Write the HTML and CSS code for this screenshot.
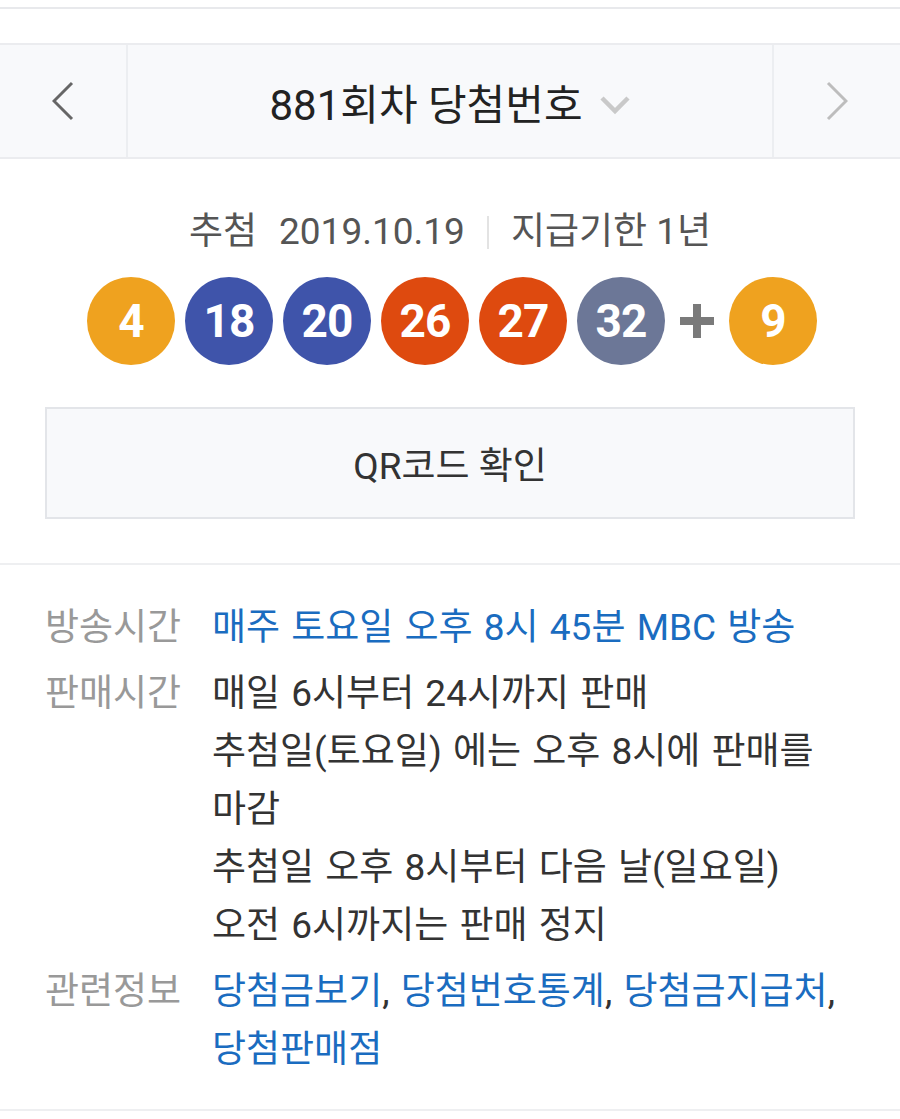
FILE: index.html
```html
<!DOCTYPE html>
<html lang="ko">
<head>
<meta charset="utf-8">
<title>881회차 당첨번호</title>
<link rel="stylesheet" href="styles.css">
</head>
<body>
<div class="topbar"></div>
<div class="spacer"></div>
<header class="round-nav">
  <div class="nav-cell">
    <svg class="arrow" width="22" height="40" viewBox="0 0 22 40"><polyline points="20,2 2,20 20,38" fill="none" stroke="#666" stroke-width="3"/></svg>
  </div>
  <div class="nav-title">
    <span class="title-text">881회차 당첨번호</span>
    <svg class="chev" width="32" height="20" viewBox="0 0 32 20"><polyline points="3,3 16,16 29,3" fill="none" stroke="#c9c9c9" stroke-width="4.5"/></svg>
  </div>
  <div class="nav-cell">
    <svg class="arrow" width="22" height="40" viewBox="0 0 22 40"><polyline points="2,2 20,20 2,38" fill="none" stroke="#bdbdbd" stroke-width="3"/></svg>
  </div>
</header>

<section class="result">
  <p class="draw-info"><span>추첨</span><span class="date">2019.10.19</span><span class="sep"></span><span>지급기한 1년</span></p>
  <div class="balls">
    <span class="ball yellow">4</span>
    <span class="ball blue">18</span>
    <span class="ball blue">20</span>
    <span class="ball red">26</span>
    <span class="ball red">27</span>
    <span class="ball gray">32</span>
    <svg class="plus" width="34" height="34" viewBox="0 0 34 34"><rect x="0" y="13" width="34" height="8" fill="#7a7a7a"/><rect x="13" y="0" width="8" height="34" fill="#7a7a7a"/></svg>
    <span class="ball yellow">9</span>
  </div>
  <div class="qr-btn">QR코드 확인</div>
</section>

<section class="info">
  <div class="row">
    <div class="label">방송시간</div>
    <div class="value link">매주 토요일 오후 8시 45분 MBC 방송</div>
  </div>
  <div class="row">
    <div class="label">판매시간</div>
    <div class="value">매일 6시부터 24시까지 판매<br>추첨일(토요일) 에는 오후 8시에 판매를<br>마감<br>추첨일 오후 8시부터 다음 날(일요일)<br>오전 6시까지는 판매 정지</div>
  </div>
  <div class="row">
    <div class="label">관련정보</div>
    <div class="value"><span class="link">당첨금보기</span>, <span class="link">당첨번호통계</span>, <span class="link">당첨금지급처</span>,<br><span class="link">당첨판매점</span></div>
  </div>
</section>
</body>
</html>
```

FILE: styles.css
```css
html, body {
  margin: 0;
  padding: 0;
  background: #fff;
}
body {
  font-family: Roboto, "Noto Sans CJK KR", sans-serif;
  color: #333;
  width: 900px;
}
.topbar {
  height: 7px;
  border-bottom: 2px solid #e8e9ec;
}
.spacer {
  height: 34px;
}
.round-nav {
  display: grid;
  grid-template-columns: 126px 1fr 126px;
  height: 112px;
  background: #f8f9fb;
  border-top: 2px solid #ebecef;
  border-bottom: 2px solid #ebecef;
}
.nav-cell {
  display: flex;
  align-items: center;
  justify-content: center;
}
.nav-title {
  display: flex;
  align-items: center;
  justify-content: center;
  border-left: 2px solid #eceef1;
  border-right: 2px solid #eceef1;
  gap: 16px;
}
.title-text {
  font-size: 42px;
  color: #222;
  letter-spacing: 0;
}
.chev {
  margin-top: 8px;
}
.result {
  padding: 50px 0 44px;
  border-bottom: 2px solid #eeeff1;
}
.draw-info {
  margin: 0;
  display: flex;
  justify-content: center;
  align-items: center;
  font-size: 37px;
  line-height: 46px;
  color: #555;
}
.date {
  margin-left: 22px;
}
.sep {
  width: 2px;
  height: 33px;
  background: #e3e3e3;
  margin: 0 22px;
}
.balls {
  display: flex;
  justify-content: center;
  align-items: center;
  gap: 10px;
  margin-top: 22px;
  padding-left: 4px;
}
.ball {
  width: 88px;
  height: 88px;
  border-radius: 50%;
  display: flex;
  align-items: center;
  justify-content: center;
  color: #fff;
  font-weight: 700;
  font-size: 46px;
  letter-spacing: -1px;
}
.yellow { background: #efa21f; }
.blue { background: #3f54aa; }
.red { background: #de4a0f; }
.gray { background: #6c7797; }
.plus {
  margin: 0 5px;
}
.qr-btn {
  margin: 42px 45px 0;
  height: 108px;
  border: 2px solid #e3e5e9;
  background: #f8f9fb;
  display: flex;
  align-items: center;
  justify-content: center;
  font-size: 37px;
  color: #333;
}
.info {
  padding: 34px 0 30px;
  border-bottom: 2px solid #eeeff1;
}
.row {
  display: flex;
  margin-bottom: 8px;
  font-size: 37px;
  line-height: 58px;
}
.row:last-child {
  margin-bottom: 0;
}
.label {
  width: 167px;
  padding-left: 45px;
  color: #999;
  flex: none;
}
.value {
  color: #333;
  white-space: nowrap;
  word-spacing: 2px;
}
.link {
  color: #1a6cc0;
}
```
